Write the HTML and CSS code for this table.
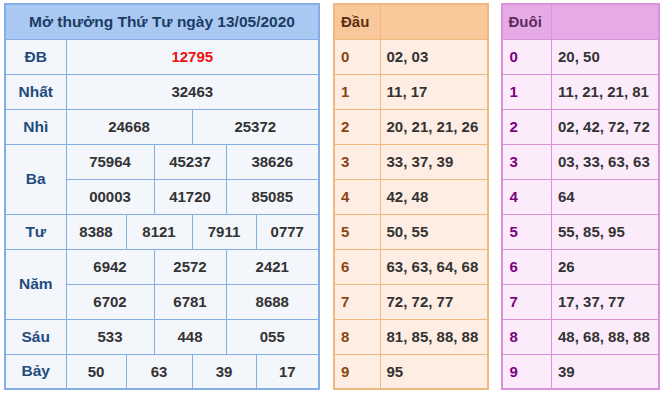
FILE: index.html
```html
<!DOCTYPE html>
<html lang="vi">
<head>
    <meta charset="UTF-8">
    <meta name="viewport" content="width=device-width, initial-scale=1.0">
    <title>Kết quả xổ số 13/05/2020</title>
    <link rel="stylesheet" href="styles.css">
</head>
<body>

<div class="board">
    <table class="kq">
        <colgroup>
            <col class="c-label">
            <col class="c1"><col class="c2"><col class="c3"><col class="c4"><col class="c5"><col class="c6">
        </colgroup>
        <tr>
            <th colspan="7" class="title">Mở thưởng Thứ Tư ngày 13/05/2020</th>
        </tr>
        <tr>
            <td class="label">ĐB</td>
            <td colspan="6" class="db">12795</td>
        </tr>
        <tr>
            <td class="label">Nhất</td>
            <td colspan="6">32463</td>
        </tr>
        <tr>
            <td class="label">Nhì</td>
            <td colspan="3">24668</td>
            <td colspan="3">25372</td>
        </tr>
        <tr>
            <td class="label" rowspan="2">Ba</td>
            <td colspan="2">75964</td>
            <td colspan="2">45237</td>
            <td colspan="2">38626</td>
        </tr>
        <tr>
            <td colspan="2">00003</td>
            <td colspan="2">41720</td>
            <td colspan="2">85085</td>
        </tr>
        <tr>
            <td class="label">Tư</td>
            <td>8388</td>
            <td colspan="2">8121</td>
            <td colspan="2">7911</td>
            <td>0777</td>
        </tr>
        <tr>
            <td class="label" rowspan="2">Năm</td>
            <td colspan="2">6942</td>
            <td colspan="2">2572</td>
            <td colspan="2">2421</td>
        </tr>
        <tr>
            <td colspan="2">6702</td>
            <td colspan="2">6781</td>
            <td colspan="2">8688</td>
        </tr>
        <tr>
            <td class="label">Sáu</td>
            <td colspan="2">533</td>
            <td colspan="2">448</td>
            <td colspan="2">055</td>
        </tr>
        <tr>
            <td class="label">Bảy</td>
            <td>50</td>
            <td colspan="2">63</td>
            <td colspan="2">39</td>
            <td>17</td>
        </tr>
    </table>

    <table class="loto dau">
        <colgroup><col class="c-key"><col></colgroup>
        <tr><th>Đầu</th><th></th></tr>
        <tr><td class="key">0</td><td>02, 03</td></tr>
        <tr><td class="key">1</td><td>11, 17</td></tr>
        <tr><td class="key">2</td><td>20, 21, 21, 26</td></tr>
        <tr><td class="key">3</td><td>33, 37, 39</td></tr>
        <tr><td class="key">4</td><td>42, 48</td></tr>
        <tr><td class="key">5</td><td>50, 55</td></tr>
        <tr><td class="key">6</td><td>63, 63, 64, 68</td></tr>
        <tr><td class="key">7</td><td>72, 72, 77</td></tr>
        <tr><td class="key">8</td><td>81, 85, 88, 88</td></tr>
        <tr><td class="key">9</td><td>95</td></tr>
    </table>

    <table class="loto duoi">
        <colgroup><col class="c-key"><col></colgroup>
        <tr><th>Đuôi</th><th></th></tr>
        <tr><td class="key">0</td><td>20, 50</td></tr>
        <tr><td class="key">1</td><td>11, 21, 21, 81</td></tr>
        <tr><td class="key">2</td><td>02, 42, 72, 72</td></tr>
        <tr><td class="key">3</td><td>03, 33, 63, 63</td></tr>
        <tr><td class="key">4</td><td>64</td></tr>
        <tr><td class="key">5</td><td>55, 85, 95</td></tr>
        <tr><td class="key">6</td><td>26</td></tr>
        <tr><td class="key">7</td><td>17, 37, 77</td></tr>
        <tr><td class="key">8</td><td>48, 68, 88, 88</td></tr>
        <tr><td class="key">9</td><td>39</td></tr>
    </table>
</div>

</body>
</html>
```

FILE: styles.css
```css
body {
    margin: 0;
    padding: 3px 4px;
    background: #fff;
    font-family: "Liberation Sans", Arial, sans-serif;
    font-weight: bold;
    font-size: 15px;
    color: #333;
}
.board {
    display: flex;
    align-items: flex-start;
}
table {
    border-collapse: collapse;
    table-layout: fixed;
}
td, th {
    height: 35px;
    padding: 0;
    box-sizing: border-box;
    white-space: nowrap;
}

/* bang ket qua */
.kq {
    width: 314px;
    border: 2px solid #86aee6;
    background: #f3f6fb;
}
.kq td, .kq th {
    border: 1px solid #86aee6;
    text-align: center;
}
.kq .c-label { width: 61px; }
.kq .c1 { width: 60px; }
.kq .c2 { width: 28px; }
.kq .c3 { width: 38px; }
.kq .c4 { width: 34px; }
.kq .c5 { width: 30px; }
.kq .c6 { width: 63px; }
.kq .title {
    background: #a9c9f2;
    color: #1d3c63;
    font-size: 15.5px;
}
.kq .label {
    color: #1f4c7d;
    font-size: 15.5px;
}
.kq .db {
    color: #ee1111;
}

/* bang loto */
.loto td, .loto th {
    text-align: left;
    padding-left: 6px;
}
.dau {
    width: 157px;
    margin-left: 13px;
    border: 2px solid #efb87e;
    background: #fdede2;
}
.dau td, .dau th {
    border: 1px solid #efb87e;
}
.dau th {
    background: #f8c89b;
    color: #5b2e0e;
}
.dau .c-key { width: 46px; }
.dau .key { color: #8b4513; }

.duoi {
    width: 161px;
    margin-left: 12px;
    border: 2px solid #da92da;
    background: #fcecfb;
}
.duoi td, .duoi th {
    border: 1px solid #da92da;
}
.duoi th {
    background: #e6aae6;
    color: #5c2a5c;
}
.duoi .c-key { width: 50px; }
.duoi .key {
    color: #800080;
    padding-left: 7px;
}
```
